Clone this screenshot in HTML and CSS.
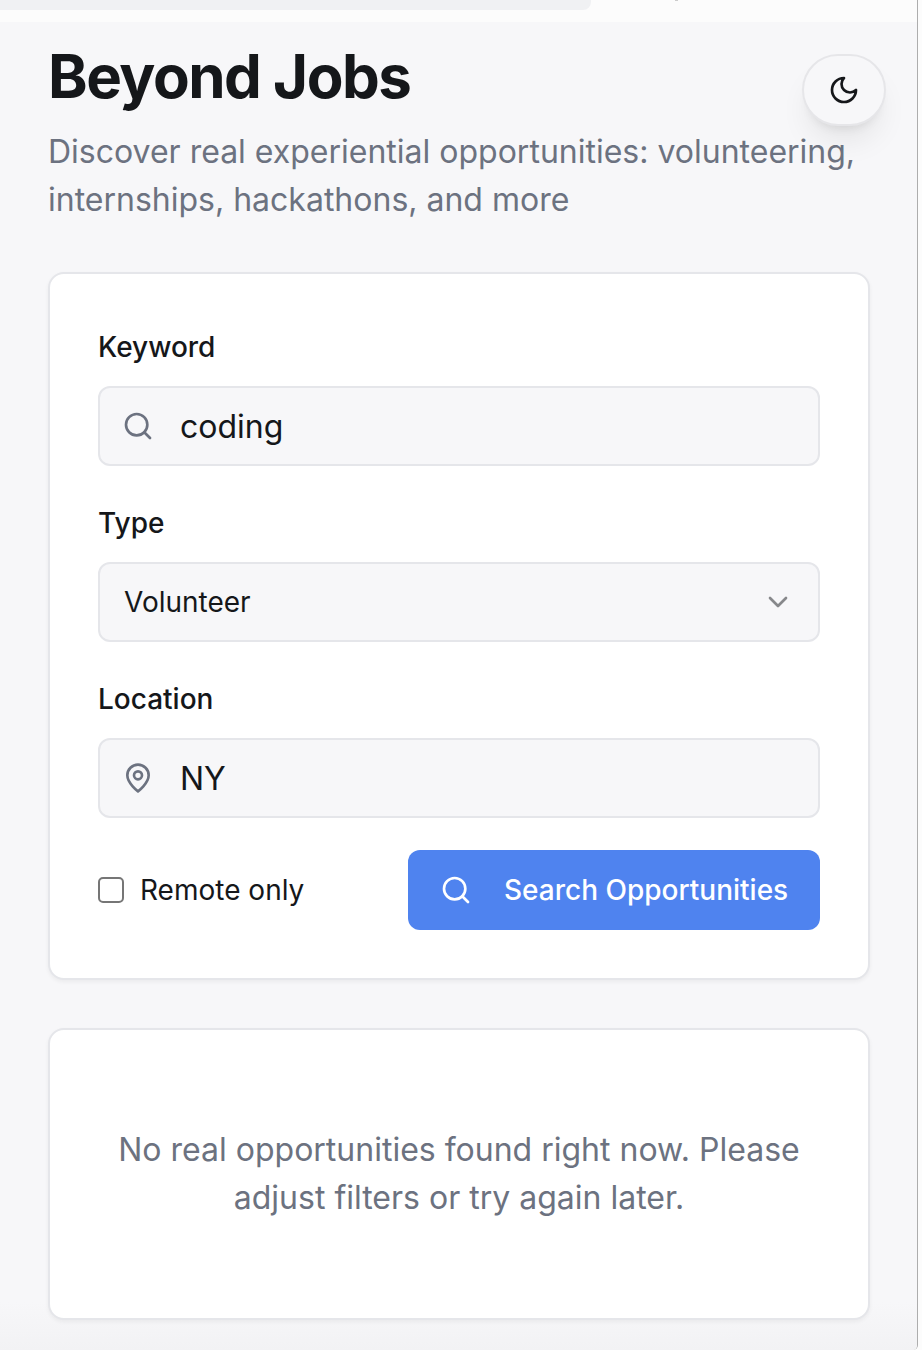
FILE: index.html
```html
<!DOCTYPE html>
<html lang="en">
<head>
<meta charset="utf-8">
<title>Beyond Jobs</title>
<link rel="stylesheet" href="styles.css">
</head>
<body>
<div class="window">
  <div class="browser-bar"><div class="address"></div><span class="bar-mark"></span></div>
  <main class="page">
    <button class="theme-toggle" aria-label="Toggle theme">
      <svg class="icon" viewBox="0 0 24 24"><path d="M12 3a6 6 0 0 0 9 9 9 9 0 1 1-9-9Z"/></svg>
    </button>
    <header class="header">
      <h1 class="title">Beyond Jobs</h1>
      <p class="subtitle">Discover real experiential opportunities: volunteering, internships, hackathons, and more</p>
    </header>
    <form class="card search-card">
      <div class="group">
        <label class="label" for="keyword">Keyword</label>
        <div class="field">
          <svg class="icon muted" viewBox="0 0 24 24"><circle cx="11" cy="11" r="8"/><path d="m21 21-4.3-4.3"/></svg>
          <input class="input" id="keyword" type="text" value="coding">
        </div>
      </div>
      <div class="group">
        <span class="label">Type</span>
        <div class="field select">
          <span class="value">Volunteer</span>
          <svg class="icon chevron" viewBox="0 0 24 24"><path d="m6 9 6 6 6-6"/></svg>
        </div>
      </div>
      <div class="group">
        <label class="label" for="location">Location</label>
        <div class="field">
          <svg class="icon muted" viewBox="0 0 24 24"><path d="M20 10c0 6-8 12-8 12s-8-6-8-12a8 8 0 0 1 16 0Z"/><circle cx="12" cy="10" r="3"/></svg>
          <input class="input" id="location" type="text" value="NY">
        </div>
      </div>
      <div class="actions">
        <label class="remote"><input class="checkbox" type="checkbox"><span class="remote-text">Remote only</span></label>
        <button class="submit" type="button">
          <svg class="icon" viewBox="0 0 24 24"><circle cx="11" cy="11" r="8"/><path d="m21 21-4.3-4.3"/></svg>
          <span class="submit-text">Search Opportunities</span>
        </button>
      </div>
    </form>
    <section class="card empty">
      <p class="empty-text">No real opportunities found right now. Please adjust filters or try again later.</p>
    </section>
  </main>
</div>
</body>
</html>
```
FILE: styles.css
```css
* { box-sizing: border-box; }
body {
  margin: 0;
  height: 1350px;
  overflow: hidden;
  background: #fcfcfc;
  color: #15171a;
  font-family: Inter, "Liberation Sans", sans-serif;
}
.window {
  width: 918px;
  height: 1350px;
  border-right: 1px solid #adadad;
  border-bottom-right-radius: 5px;
  overflow: hidden;
}
.browser-bar {
  display: flex;
  gap: 84px;
  height: 22px;
  background: #fcfcfc;
}
.address {
  width: 591px;
  height: 10px;
  background: #f0f1f3;
  border-bottom-right-radius: 8px;
}
.bar-mark { width: 3px; height: 1px; background: #ccc; }
.page {
  position: relative;
  height: 1328px;
  padding: 19px 47px 0 48px;
  background: linear-gradient(#f7f7f9 1280px, #f2f2f4);
}
.theme-toggle {
  position: absolute;
  top: 32px;
  right: 31px;
  display: flex;
  align-items: center;
  justify-content: center;
  width: 84px;
  height: 72px;
  padding: 0;
  border: 2px solid #e6e6e9;
  border-radius: 36px;
  background: #f7f7f9;
  color: #15171a;
  box-shadow: 0 20px 30px -6px rgba(0,0,0,.08), 0 8px 12px -8px rgba(0,0,0,.12);
}
.icon {
  flex: none;
  width: 32px;
  height: 32px;
  fill: none;
  stroke: currentColor;
  stroke-width: 2;
  stroke-linecap: round;
  stroke-linejoin: round;
}
.muted { color: #6c7280; }
.header { position: relative; pointer-events: none; }
.title {
  margin: 0;
  font-size: 60px;
  line-height: 70px;
  font-weight: 700;
  letter-spacing: -1.5px;
}
.subtitle {
  margin: 17px 0 0;
  font-size: 32px;
  line-height: 48px;
  color: #6c7280;
}
.card {
  background: #fff;
  border: 2px solid #e5e6ea;
  border-radius: 16px;
  box-shadow: 0 2px 4px rgba(0,0,0,.05);
}
.search-card {
  display: flex;
  flex-direction: column;
  gap: 32px;
  height: 708px;
  margin-top: 48px;
  padding: 48px;
}
.group { display: flex; flex-direction: column; }
.label {
  height: 64px;
  padding-top: 4px;
  font-size: 28px;
  line-height: 42px;
  font-weight: 500;
}
.field {
  display: flex;
  align-items: center;
  gap: 26px;
  height: 80px;
  padding: 0 22px;
  border: 2px solid #e5e6ea;
  border-radius: 12px;
  background: #f7f7f9;
}
.input {
  flex: 1;
  min-width: 0;
  padding: 2px 0 0;
  border: 0;
  outline: 0;
  background: transparent;
  color: inherit;
  font: 32px/48px Inter, "Liberation Sans", sans-serif;
}
.select { justify-content: space-between; padding: 0 24px; font-size: 28px; }
.chevron { color: #87888b; }
.actions { display: flex; justify-content: space-between; align-items: center; }
.remote { display: flex; align-items: center; gap: 16px; font-size: 28px; }
.checkbox {
  appearance: none;
  width: 26px;
  height: 26px;
  margin: 0;
  border: 2px solid #767676;
  border-radius: 5px;
  background: #fff;
}
.submit {
  display: flex;
  align-items: center;
  gap: 32px;
  width: 412px;
  height: 80px;
  padding: 0 32px;
  border: 0;
  border-radius: 12px;
  background: #4f83ef;
  color: #fff;
  font: 500 28px/40px Inter, "Liberation Sans", sans-serif;
  white-space: nowrap;
}
.empty {
  height: 292px;
  margin-top: 48px;
  padding: 96px 48px;
}
.empty-text {
  margin: 0;
  text-align: center;
  font-size: 32px;
  line-height: 48px;
  color: #6c7280;
}
```
